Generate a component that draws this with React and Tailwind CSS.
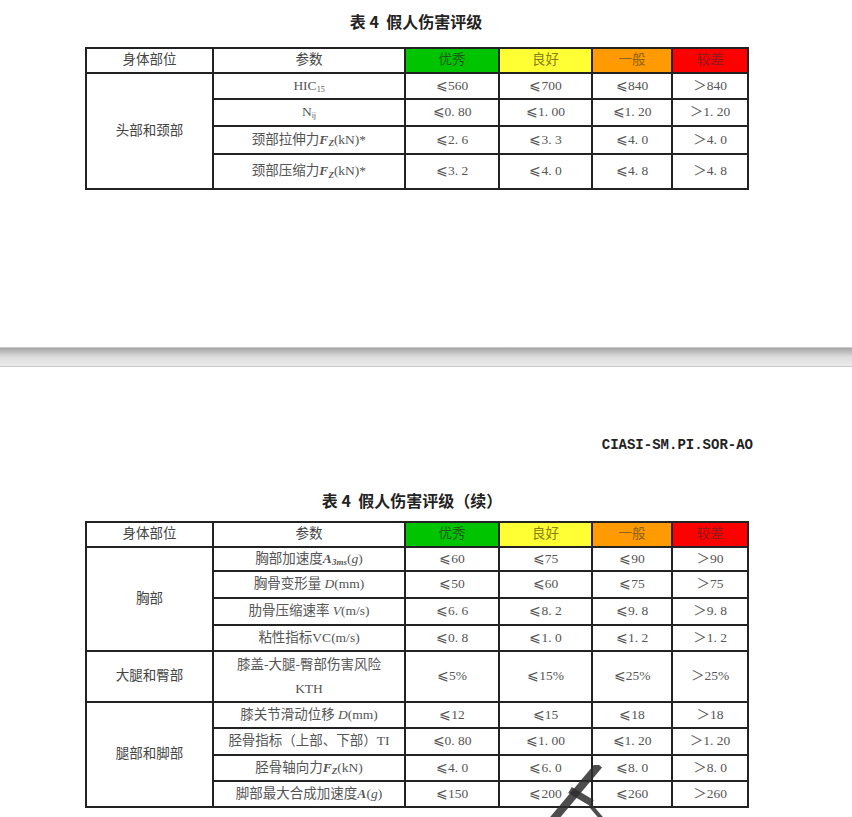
import React from 'react';

const serif = { fontFamily: '"Liberation Serif", "Noto Sans CJK SC", serif' };
const sans = { fontFamily: '"Noto Sans CJK SC", "Liberation Sans", sans-serif' };

const LE = '⩽';
const GT = '＞';

function Header() {
    return (
        <tr className="h-[25px]">
            <td className="border-2 border-[#222] text-[#444]">身体部位</td>
            <td className="border-2 border-[#222] text-[#444]">参数</td>
            <td className="border-2 border-[#222] bg-[#00c400] text-[#1d5a14]">优秀</td>
            <td className="border-2 border-[#222] bg-[#ffff33] text-[#8b8013]">良好</td>
            <td className="border-2 border-[#222] bg-[#ff9a00] text-[#8f6218]">一般</td>
            <td className="border-2 border-[#222] bg-[#ff0000] text-[#8e1a1a]">较差</td>
        </tr>
    );
}

function Vals({ v }) {
    return (
        <>
            <td className="border-2 border-[#222]">{LE}{v[0]}</td>
            <td className="border-2 border-[#222]">{LE}{v[1]}</td>
            <td className="border-2 border-[#222]">{LE}{v[2]}</td>
            <td className="border-2 border-[#222]">{GT}{v[3]}</td>
        </>
    );
}

function Fz() {
    return (
        <span className="font-bold italic">
            F<sub className="text-[9px]">Z</sub>
        </span>
    );
}

function Table({ children }) {
    return (
        <table
            className="ml-[85px] w-[662px] table-fixed border-collapse text-center text-[13.5px] text-[#555]"
            style={serif}
        >
            <colgroup>
                <col className="w-[127px]" />
                <col className="w-[192px]" />
                <col className="w-[94px]" />
                <col className="w-[93px]" />
                <col className="w-[80px]" />
                <col className="w-[76px]" />
            </colgroup>
            <tbody>{children}</tbody>
        </table>
    );
}

export default function App() {
    return (
        <div className="w-[852px] bg-white">
            {/* page 1 */}
            <div className="h-[347px] pt-[11px]">
                <div className="h-[20px] pr-[20px] text-center text-[16px] font-bold leading-[20px] text-[#222]" style={sans}>
                    表 4&nbsp;&nbsp;假人伤害评级
                </div>
                <div className="mt-[16px]">
                    <Table>
                        <Header />
                        <tr className="h-[26px]">
                            <td rowSpan={4} className="border-2 border-[#222] text-[#444]">头部和颈部</td>
                            <td className="border-2 border-[#222]">
                                HIC<sub className="text-[8px]">15</sub>
                            </td>
                            <Vals v={['560', '700', '840', '840']} />
                        </tr>
                        <tr className="h-[27px]">
                            <td className="border-2 border-[#222]">
                                N<sub className="text-[8px]">ij</sub>
                            </td>
                            <Vals v={['0. 80', '1. 00', '1. 20', '1. 20']} />
                        </tr>
                        <tr className="h-[28px]">
                            <td className="border-2 border-[#222]">
                                颈部拉伸力<Fz />(kN)*
                            </td>
                            <Vals v={['2. 6', '3. 3', '4. 0', '4. 0']} />
                        </tr>
                        <tr className="h-[35px]">
                            <td className="border-2 border-[#222]">
                                颈部压缩力<Fz />(kN)*
                            </td>
                            <Vals v={['3. 2', '4. 0', '4. 8', '4. 8']} />
                        </tr>
                    </Table>
                </div>
            </div>

            {/* page break */}
            <div className="h-[20px] border-y border-[#c9c9c9] bg-gradient-to-b from-[#a6a6a6] via-[#dedede] to-[#ebebeb]" />

            {/* page 2 */}
            <div className="relative h-[450px] overflow-hidden pt-[70px]">
                <div
                    className="h-[16px] pr-[99px] text-right text-[14px] font-bold leading-[16px] text-[#222]"
                    style={{ fontFamily: '"Liberation Mono", monospace' }}
                >
                    CIASI-SM.PI.SOR-AO
                </div>
                <div
                    className="mt-[37px] h-[20px] pr-[28px] text-center text-[16px] font-bold leading-[20px] text-[#222]"
                    style={sans}
                >
                    表 4&nbsp;&nbsp;假人伤害评级（续）
                </div>
                <div className="mt-[11px]">
                    <Table>
                        <Header />
                        <tr className="h-[24px]">
                            <td rowSpan={4} className="border-2 border-[#222] text-[#444]">胸部</td>
                            <td className="border-2 border-[#222]">
                                胸部加速度<span className="font-bold italic">A<sub className="text-[9px]">3ms</sub></span>(<span className="italic">g</span>)
                            </td>
                            <Vals v={['60', '75', '90', '90']} />
                        </tr>
                        <tr className="h-[27px]">
                            <td className="border-2 border-[#222]">
                                胸骨变形量 <span className="italic">D</span>(mm)
                            </td>
                            <Vals v={['50', '60', '75', '75']} />
                        </tr>
                        <tr className="h-[27px]">
                            <td className="border-2 border-[#222]">
                                肋骨压缩速率 <span className="italic">V</span>(m/s)
                            </td>
                            <Vals v={['6. 6', '8. 2', '9. 8', '9. 8']} />
                        </tr>
                        <tr className="h-[26px]">
                            <td className="border-2 border-[#222]">粘性指标VC(m/s)</td>
                            <Vals v={['0. 8', '1. 0', '1. 2', '1. 2']} />
                        </tr>
                        <tr className="h-[51px]">
                            <td className="border-2 border-[#222] text-[#444]">大腿和臀部</td>
                            <td className="border-2 border-[#222] leading-[24px]">
                                膝盖-大腿-臀部伤害风险
                                <br />
                                KTH
                            </td>
                            <Vals v={['5%', '15%', '25%', '25%']} />
                        </tr>
                        <tr className="h-[26px]">
                            <td rowSpan={4} className="border-2 border-[#222] text-[#444]">腿部和脚部</td>
                            <td className="border-2 border-[#222]">
                                膝关节滑动位移 <span className="italic">D</span>(mm)
                            </td>
                            <Vals v={['12', '15', '18', '18']} />
                        </tr>
                        <tr className="h-[27px]">
                            <td className="border-2 border-[#222]">胫骨指标（上部、下部）TI</td>
                            <Vals v={['0. 80', '1. 00', '1. 20', '1. 20']} />
                        </tr>
                        <tr className="h-[26px]">
                            <td className="border-2 border-[#222]">
                                胫骨轴向力<Fz />(kN)
                            </td>
                            <Vals v={['4. 0', '6. 0', '8. 0', '8. 0']} />
                        </tr>
                        <tr className="h-[26px]">
                            <td className="border-2 border-[#222]">
                                脚部最大合成加速度<span className="font-bold italic">A</span>(<span className="italic">g</span>)
                            </td>
                            <Vals v={['150', '200', '260', '260']} />
                        </tr>
                    </Table>
                </div>

                {/* watermark fragment */}
                <svg className="absolute left-[530px] top-[398px]" width="80" height="52" viewBox="0 0 80 52">
                    <g fill="none" stroke="#2e2e2e" strokeOpacity="0.85" strokeLinecap="butt">
                        <line x1="69" y1="0" x2="22" y2="56" strokeWidth="8" />
                        <line x1="40" y1="25" x2="62" y2="38" strokeWidth="7" />
                        <line x1="60" y1="40" x2="72" y2="54" strokeWidth="4" />
                    </g>
                </svg>
            </div>
        </div>
    );
}
